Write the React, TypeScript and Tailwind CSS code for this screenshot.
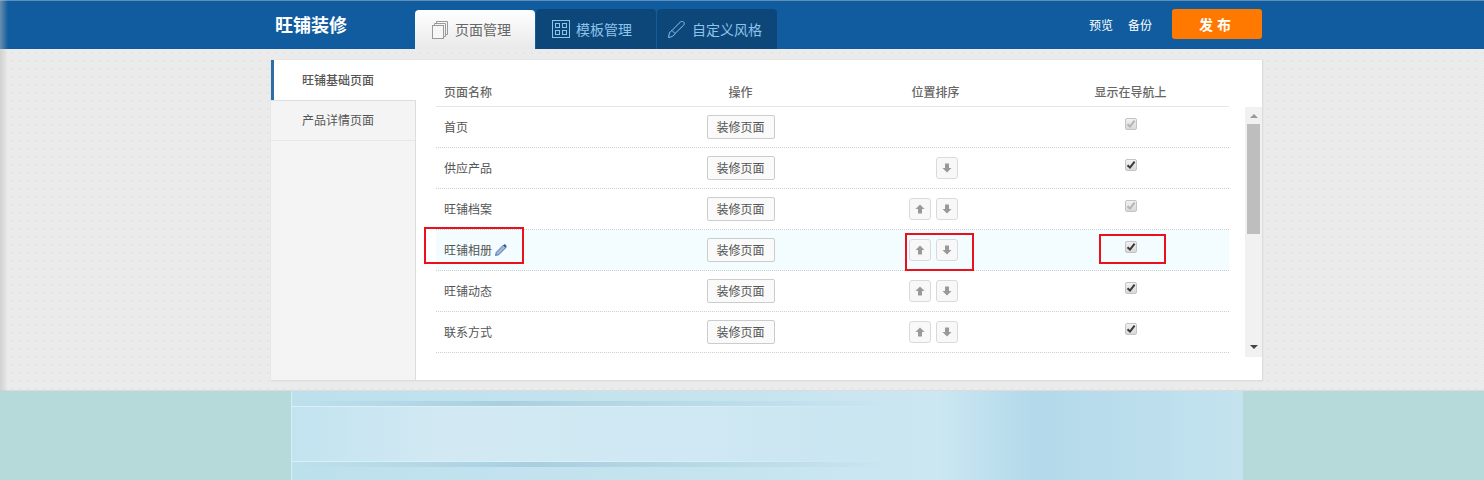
import React from "react";

const font = "font-['Microsoft_YaHei','Noto_Sans_CJK_SC',sans-serif]";

const rows = [
  { name: "首页", up: false, down: false, disabled: true },
  { name: "供应产品", up: false, down: true, disabled: false },
  { name: "旺铺档案", up: true, down: true, disabled: true },
  { name: "旺铺相册", up: true, down: true, disabled: false, active: true },
  { name: "旺铺动态", up: true, down: true, disabled: false },
  { name: "联系方式", up: true, down: true, disabled: false },
];

function PagesIcon() {
  return (
    <svg width="16" height="18" viewBox="0 0 16 18" fill="none" stroke="#9a9a9a" strokeWidth="1">
      <rect x="0.5" y="4.5" width="11" height="13" fill="#f6f6f6" />
      <path d="M2.5 4.5V2.5H13.5V15.5H11.5M4.5 2.5V0.5H15.5V13.5H13.5" />
    </svg>
  );
}

function GridIcon() {
  return (
    <svg width="18" height="18" viewBox="0 0 18 18" fill="none" stroke="#8cc4ec" strokeWidth="1">
      <rect x="0.5" y="0.5" width="17" height="17" />
      <rect x="3.5" y="3.5" width="4" height="4" />
      <rect x="10.5" y="3.5" width="4" height="4" />
      <rect x="3.5" y="10.5" width="4" height="4" />
      <rect x="10.5" y="10.5" width="4" height="4" />
    </svg>
  );
}

function BrushIcon() {
  return (
    <svg width="17" height="17" viewBox="0 0 17 17" fill="none" stroke="#8cc4ec" strokeWidth="1">
      <path d="M0.5 16.5C1 13 1.5 10.5 4 9.5L12.5 0.8C13.5 0 15.5 0.5 16 1.5C16.5 2.5 16.3 3.6 15.5 4.3L7 12.5C6 15 3.5 16 0.5 16.5Z" />
      <path d="M4 9.5L7 12.5" />
    </svg>
  );
}

function Pencil() {
  return (
    <svg width="12" height="12" viewBox="0 0 12 12">
      <path d="M0.5 11.5L1.3 8.2L8.3 1.2L10.8 3.7L3.8 10.7Z" fill="#9db8e0" stroke="#3f5f96" strokeWidth="0.8" />
      <path d="M8.8 0.8C9.4 0.2 10 0.2 10.6 0.8L11.2 1.4C11.8 2 11.8 2.6 11.2 3.2L10.6 3.8L8.2 1.4Z" fill="#3f5f96" />
    </svg>
  );
}

function ArrowButton({ dir, hidden }: { dir: "up" | "down"; hidden?: boolean }) {
  if (hidden) return <div className="w-[22px] h-[22px]" />;
  return (
    <div className="w-[22px] h-[22px] flex items-center justify-center border border-[#dadada] rounded-[3px] bg-[#f8f8f8]">
      <svg width="10" height="10" viewBox="0 0 10 10" fill="#999999" className={dir === "up" ? "" : "rotate-180"}>
        <path d="M5 0.5L9.5 5H7V9.5H3V5H0.5Z" />
      </svg>
    </div>
  );
}

function Check({ disabled }: { disabled: boolean }) {
  return (
    <div className="w-[12px] h-[12px] flex items-center justify-center rounded-[2px] border border-[#c4c4c4] bg-gradient-to-b from-[#f2f2f2] to-[#d8d8d8]">
      <svg width="10" height="10" viewBox="0 0 10 10" fill="none" stroke={disabled ? "#b4b4b4" : "#3a3a3a"} strokeWidth="2">
        <path d="M1.5 5.2L4 7.6L8.6 1.6" />
      </svg>
    </div>
  );
}

export default function App() {
  return (
    <div className={`relative w-[1484px] h-[480px] overflow-hidden bg-[#b5dad9] ${font}`}>
      <header className="h-[49px] flex bg-[#105c9f] border-t border-[#5f8fbb] pl-[275px]">
        <div className="w-[140px] pt-[11px] text-[18px] leading-[24px] font-bold text-white">旺铺装修</div>
        <div className="flex items-end gap-px h-full">
          <div className="w-[120px] h-[39px] flex items-center gap-[7px] pl-[17px] rounded-t-[4px] bg-gradient-to-b from-white to-[#e9e9e9] text-[14px] text-[#666]">
            <PagesIcon />
            页面管理
          </div>
          <div className="w-[120px] h-[40px] flex items-center gap-[6px] pl-[16px] rounded-t-[4px] bg-[#0d4779] text-[14px] text-[#8cc4ec]">
            <GridIcon />
            模板管理
          </div>
          <div className="w-[120px] h-[40px] flex items-center gap-[7px] pl-[11px] rounded-t-[4px] bg-[#0d4779] text-[14px] text-[#8cc4ec]">
            <BrushIcon />
            自定义风格
          </div>
        </div>
        <div className="ml-[312px] flex gap-[15px] pt-[15px] text-[12px] leading-[18px] text-white">
          <span>预览</span>
          <span>备份</span>
        </div>
        <div className="ml-[20px] mt-[8px] w-[90px] h-[30px] flex items-center justify-center rounded-[3px] bg-[#ff7800] text-[14px] font-bold tracking-[4px] text-white">
          发布
        </div>
      </header>

      <main className="h-[342px] pt-[11px] pl-[271px] bg-[#ebebeb] bg-[radial-gradient(#dedede_0.6px,transparent_0.8px)] bg-[length:8px_8px] border-b border-[#dcdcdc]">
        <div className="w-[992px] h-[321px] flex bg-white border-r border-b border-[#dddddd] shadow-[0_0_1px_#ccc]">
          <aside className="w-[145px] shrink-0 flex flex-col bg-[#f4f4f4] border-r border-[#dddddd] text-[12px] text-[#555]">
            <div className="h-[40px] -mr-px flex items-center pl-[28px] bg-white border-l-[3px] border-[#2f6ea5] font-medium">
              <span className="-mt-px">旺铺基础页面</span>
            </div>
            <div className="h-[41px] flex items-center pl-[31px] border-t border-b border-t-[#dddddd] border-b-[#e8e8e8]">
              <span className="-mt-px">产品详情页面</span>
            </div>
          </aside>

          <section className="flex-1 pl-[20px] pt-[18px] text-[12px] text-[#555]">
            <div className="w-[793px] h-[29px] grid grid-cols-[207px_195px_195px_196px] items-center border-b border-[#e6e6e6] font-medium text-[#666]">
              <div className="pl-2">页面名称</div>
              <div className="text-center">操作</div>
              <div className="text-center">位置排序</div>
              <div className="text-center pr-px">显示在导航上</div>
            </div>
            <div className="flex h-[250px] gap-[16px]">
              <div className="w-[793px]">
                {rows.map((r) => (
                  <div
                    key={r.name}
                    className={`h-[41px] grid grid-cols-[207px_195px_195px_196px] items-center border-b border-dotted border-[#cfcfcf] ${r.active ? "bg-[#f3fcfe]" : ""}`}
                  >
                    <div className="pl-2 -mt-px flex items-center gap-[3px]">
                      {r.name}
                      {r.active && <Pencil />}
                    </div>
                    <div className="flex justify-center">
                      <div className="w-[68px] h-[24px] flex items-center justify-center border border-[#cccccc] rounded-[2px] bg-[#fafafa] text-[#555]">
                        装修页面
                      </div>
                    </div>
                    <div className="flex gap-[5px] pl-[71px]">
                      <ArrowButton dir="up" hidden={!r.up} />
                      <ArrowButton dir="down" hidden={!r.down} />
                    </div>
                    <div className="flex justify-center pr-px -mt-[7px]">
                      <Check disabled={r.disabled} />
                    </div>
                  </div>
                ))}
              </div>
              <div className="w-[17px] h-[250px] flex flex-col items-center bg-[#f1f1f1]">
                <div className="h-[17px] flex items-center justify-center">
                  <div className="w-0 h-0 border-x-[4px] border-x-transparent border-b-[4px] border-b-[#9a9a9a]" />
                </div>
                <div className="w-[13px] h-[110px] bg-[#bebebe]" />
                <div className="mt-auto h-[20px] flex items-center justify-center">
                  <div className="w-0 h-0 border-x-[4px] border-x-transparent border-t-[4px] border-t-[#444]" />
                </div>
              </div>
            </div>
          </section>
        </div>
      </main>

      <div className="ml-[291px] w-[952px] h-[89px] pt-[10px] border-l border-[#d5eef3] bg-[linear-gradient(90deg,#bde0ed,#c4e3ef_40%,#cbe7f2_68%,#b3d9ea_78%,#c4e3ef_100%)]">
        <div className="h-[5px] w-[600px] bg-[linear-gradient(90deg,transparent,#a9cfdf_35%,#b4d6e4_50%,transparent)]" />
        <div className="w-[600px] h-[56px] flex flex-col justify-between bg-[linear-gradient(90deg,#c2e3f0,#d2e9f3_25%,#cfe8f3_70%,transparent)]">
          <div className="h-px bg-[linear-gradient(90deg,#d8f0f8,#d8f0f8_60%,transparent)]" />
          <div className="h-px bg-[linear-gradient(90deg,#d8f0f8,#d8f0f8_60%,transparent)]" />
        </div>
        <div className="h-[5px] w-[600px] bg-[linear-gradient(90deg,transparent,#a9cfdf_40%,#b4d6e4_60%,transparent)]" />
      </div>

      {/* red annotation boxes drawn over the screenshot */}
      <div className="absolute left-[424px] top-[227px] w-[100px] h-[37px] border-2 border-[#e8111c]" />
      <div className="absolute left-[905px] top-[233px] w-[69px] h-[38px] border-2 border-[#e8111c]" />
      <div className="absolute left-[1099px] top-[234px] w-[67px] h-[30px] border-2 border-[#e8111c]" />

      {/* soft shade on the left edge of the editor */}
      <div className="absolute left-0 top-0 w-[8px] h-[391px] bg-gradient-to-r from-[#bbbbbb88] to-transparent" />
    </div>
  );
}
